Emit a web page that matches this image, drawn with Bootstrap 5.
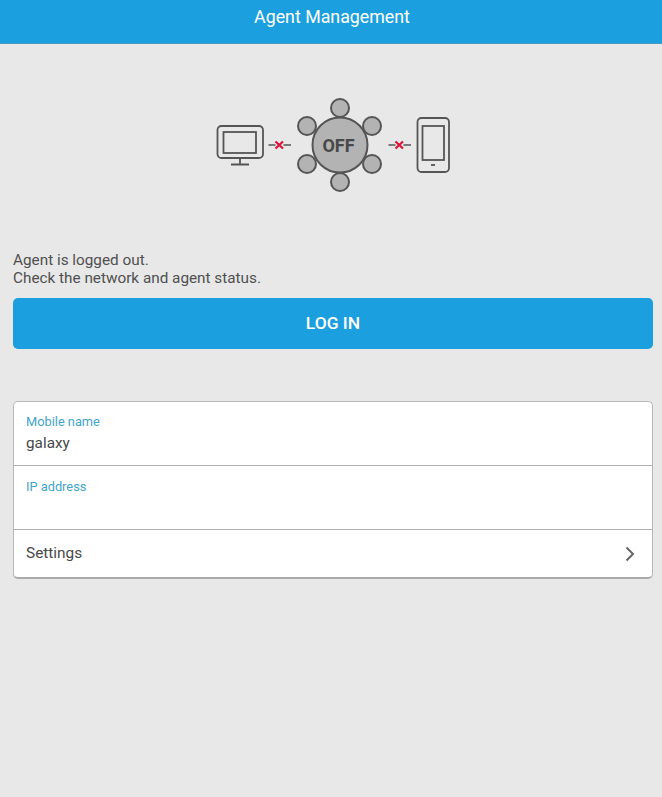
<!doctype html>
<html lang="en">
<head>
<meta charset="utf-8">
<title>Agent Management</title>
<link href="https://cdn.jsdelivr.net/npm/bootstrap@5.3.0/dist/css/bootstrap.min.css" rel="stylesheet">
<style>
body { background: #e8e8e8; font-family: Roboto, "Liberation Sans", sans-serif; color: #444; min-height: 797px; }
.app-head { height: 44px; background: #1b9fdf; border-bottom: 1px solid #4a97c4; color: #fff; font-size: 17.8px; line-height: 34px; padding-left: 2px; }
.diagram { display: block; width: 240px; height: 96px; margin: 53px auto 58px; }
.diagram .off { font: 700 18px Roboto, sans-serif; fill: #484848; }
.status { font-size: 15.3px; line-height: 18px; margin: 0 13px 11px; color: #505050; }
.login-btn { display: block; width: calc(100% - 22px); margin: 0 9px 0 13px; height: 51px; padding-top: 6px; background: #1b9fdf; border: 0; border-radius: 5px; color: #fff; font-size: 17.4px; font-weight: 500; }
.login-btn:hover { background: #1b9fdf; color: #fff; }
.panel { margin: 52px 9px 0 13px; background: #fff; border: 1px solid #b8b8b8; border-bottom: 2px solid #aaa; border-radius: 5px; overflow: hidden; }
.field { height: 64px; padding: 12px 12px 0; border-bottom: 1px solid #b0b0b0; }
.field + .field { padding-top: 13px; }
.field-label { font-size: 12.8px; line-height: 15px; color: #3fa5cc; }
.field-value { font-size: 15.3px; line-height: 20px; margin-top: 4px; color: #484848; }
.settings { height: 47px; padding: 1px 17px 0 12px; font-size: 15.4px; color: #484848; }
</style>
</head>
<body>
<header class="app-head text-center">Agent Management</header>
<svg class="diagram" viewBox="211 97 240 96" role="img" aria-label="Disconnected agent diagram">
  <g fill="none" stroke="#555" stroke-width="1.8">
    <rect x="217.5" y="126" width="45.5" height="32" rx="4"/>
    <rect x="223.5" y="132" width="32.5" height="21"/>
    <path d="M240 158v6M231 164.5h18"/>
    <rect x="417.5" y="118" width="31.5" height="54" rx="4"/>
    <rect x="422.5" y="126" width="21.5" height="34"/>
    <path d="M431 165h4"/>
    <path d="M268.500 145h7M283.500 145h7.500M388.500 145h7M403.500 145h7.500" stroke-width="1.300"/>
  </g>
  <path d="M275.500 141.500l7.500 7M283 141.500l-7.500 7M395.500 141.500l7.500 7M403 141.500l-7.500 7" fill="none" stroke="#dc1238" stroke-width="2.200"/>
  <g fill="#b3b3b3" stroke="#555" stroke-width="2">
    <circle cx="340" cy="108" r="9"/>
    <circle cx="340" cy="182" r="9"/>
    <circle cx="307" cy="126" r="9"/>
    <circle cx="372" cy="126" r="9"/>
    <circle cx="307" cy="164" r="9"/>
    <circle cx="372" cy="164" r="9"/>
    <circle cx="340" cy="145" r="27.500"/>
  </g>
  <text class="off" x="338.500" y="151.500" text-anchor="middle">OFF</text>
</svg>
<p class="status">Agent is logged out.<br>Check the network and agent status.</p>
<button type="button" class="btn login-btn">LOG IN</button>
<section class="panel">
  <div class="field">
    <div class="field-label">Mobile name</div>
    <div class="field-value">galaxy</div>
  </div>
  <div class="field">
    <div class="field-label">IP address</div>
    <div class="field-value"></div>
  </div>
  <div class="settings d-flex align-items-center justify-content-between">
    <span>Settings</span>
    <svg width="10" height="16" viewBox="0 0 10 16" aria-hidden="true"><path d="M1.500 1.500L8 8l-6.500 6.500" fill="none" stroke="#666" stroke-width="2"/></svg>
  </div>
</section>
<script src="https://cdn.jsdelivr.net/npm/bootstrap@5.3.0/dist/js/bootstrap.bundle.min.js"></script>
</body>
</html>
